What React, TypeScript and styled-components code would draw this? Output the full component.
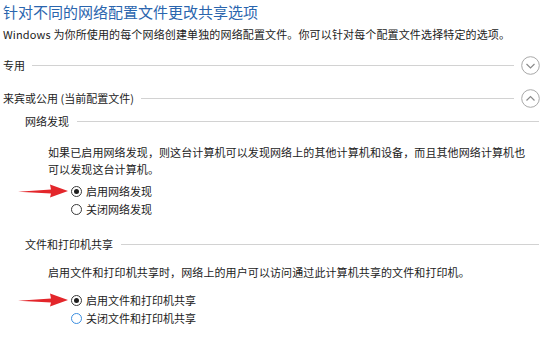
import styled, { createGlobalStyle } from "styled-components";

const GlobalStyle = createGlobalStyle`
  html, body {
    margin: 0;
    background: #ffffff;
  }
  body {
    font-family: "Noto Sans CJK SC", "Noto Sans", sans-serif;
    color: #222222;
  }
`;

const App: React.FC = () => {
  return (
    <>
      <GlobalStyle />
      <Page>
        <Title>针对不同的网络配置文件更改共享选项</Title>
        <Description>
          Windows 为你所使用的每个网络创建单独的网络配置文件。你可以针对每个配置文件选择特定的选项。
        </Description>

        <SectionHeader $top={13}>
          <HeaderLabel>专用</HeaderLabel>
          <Rule />
          <Chevron direction="down" />
        </SectionHeader>

        <SectionHeader $top={13}>
          <HeaderLabel>来宾或公用 (当前配置文件)</HeaderLabel>
          <Rule />
          <Chevron direction="up" />
        </SectionHeader>

        <SubHeader $top={4}>
          <SubLabel>网络发现</SubLabel>
          <Rule />
        </SubHeader>
        <Paragraph $top={14}>
          如果已启用网络发现，则这台计算机可以发现网络上的其他计算机和设备，而且其他网络计算机也可以发现这台计算机。
        </Paragraph>
        <RadioGroup $top={4}>
          <RadioRow>
            <Arrow />
            <RadioCircle $checked />
            <RadioLabel>启用网络发现</RadioLabel>
          </RadioRow>
          <RadioRow>
            <RadioCircle />
            <RadioLabel>关闭网络发现</RadioLabel>
          </RadioRow>
        </RadioGroup>

        <SubHeader $top={17}>
          <SubLabel>文件和打印机共享</SubLabel>
          <Rule />
        </SubHeader>
        <Paragraph $top={11}>
          启用文件和打印机共享时，网络上的用户可以访问通过此计算机共享的文件和打印机。
        </Paragraph>
        <RadioGroup $top={10}>
          <RadioRow>
            <Arrow />
            <RadioCircle $checked />
            <RadioLabel>启用文件和打印机共享</RadioLabel>
          </RadioRow>
          <RadioRow>
            <RadioCircle $focused />
            <RadioLabel>关闭文件和打印机共享</RadioLabel>
          </RadioRow>
        </RadioGroup>
      </Page>
    </>
  );
};

const Chevron: React.FC<{ direction: "up" | "down" }> = ({ direction }) => (
  <ChevronIcon viewBox="0 0 19 19" width={19} height={19}>
    <circle cx="9.5" cy="9.5" r="8.8" fill="none" stroke="#a8a8a8" strokeWidth="1" />
    <polyline
      points={direction === "down" ? "5.5,8 9.5,12 13.5,8" : "5.5,11.5 9.5,7.5 13.5,11.5"}
      fill="none"
      stroke="#8a8a8a"
      strokeWidth="1.2"
    />
  </ChevronIcon>
);

const Arrow: React.FC = () => (
  <ArrowIcon viewBox="0 0 51 16" width={51} height={16}>
    <polygon
      points="0,8.8 33,6.4 32,1.5 50,8 32,14.5 33,10.4"
      fill="#e3262b"
    />
  </ArrowIcon>
);

export default App;

const Page = styled.div`
  padding: 0 2px 0 3px;
  display: flex;
  flex-direction: column;
`;

const Title = styled.div`
  margin-top: 2px;
  font-size: 15px;
  line-height: 20px;
  color: #2a65ae;
`;

const Description = styled.div`
  margin-top: 4px;
  font-size: 11px;
  line-height: 16px;
  letter-spacing: 0.14px;
  white-space: nowrap;
`;

const SectionHeader = styled.div<{ $top: number }>`
  margin-top: ${({ $top }) => $top}px;
  height: 20px;
  display: flex;
  align-items: center;
  gap: 6px;
`;

const HeaderLabel = styled.span`
  font-size: 11px;
  line-height: 20px;
  white-space: nowrap;
  margin-right: 1px;
`;

const Rule = styled.div`
  flex: 1;
  height: 1px;
  background: #d2d2d2;
  margin-right: 1px;
`;

const ChevronIcon = styled.svg`
  flex: none;
  display: block;
`;

const SubHeader = styled.div<{ $top: number }>`
  margin: ${({ $top }) => $top}px 0 0 22px;
  height: 18px;
  display: flex;
  align-items: center;
  gap: 8px;
`;

const SubLabel = styled.span`
  font-size: 11px;
  line-height: 18px;
  white-space: nowrap;
`;

const Paragraph = styled.div<{ $top: number }>`
  margin: ${({ $top }) => $top}px 0 0 45px;
  max-width: 482px;
  font-size: 11px;
  line-height: 17px;
  letter-spacing: 0.1px;
`;

const RadioGroup = styled.div<{ $top: number }>`
  margin: ${({ $top }) => $top}px 0 0 68px;
  display: flex;
  flex-direction: column;
`;

const RadioRow = styled.div`
  position: relative;
  height: 18px;
  display: flex;
  align-items: center;
`;

const RadioCircle = styled.span<{ $checked?: boolean; $focused?: boolean }>`
  box-sizing: border-box;
  width: 11px;
  height: 11px;
  border-radius: 50%;
  border: 1px solid ${({ $focused }) => ($focused ? "#3b8ee0" : "#3a3a3a")};
  display: flex;
  align-items: center;
  justify-content: center;
  flex: none;

  &::after {
    content: "";
    display: ${({ $checked }) => ($checked ? "block" : "none")};
    width: 5px;
    height: 5px;
    border-radius: 50%;
    background: #1e1e1e;
  }
`;

const RadioLabel = styled.span`
  margin-left: 4px;
  font-size: 11px;
  line-height: 18px;
  white-space: nowrap;
`;

const ArrowIcon = styled.svg`
  position: absolute;
  left: -53px;
  top: 1px;
  display: block;
`;
